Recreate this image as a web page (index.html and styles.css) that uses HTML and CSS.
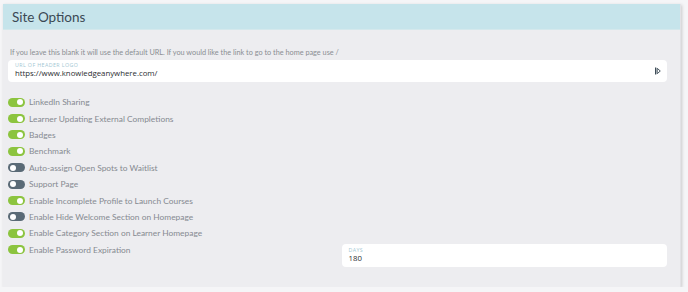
FILE: index.html
```html
<!DOCTYPE html>
<html lang="en">
<head>
    <meta charset="UTF-8">
    <title>Site Options</title>
    <link rel="stylesheet" href="styles.css">
</head>
<body>
    <section class="panel">
        <div class="panel-header">Site Options</div>
        <div class="panel-body">
            <p class="help">If you leave this blank it will use the default URL. If you would like the link to go to the home page use /</p>
            <div class="field">
                <span class="field-label">URL of Header Logo</span>
                <span class="field-value">https://www.knowledgeanywhere.com/</span>
                <svg class="field-icon" width="6" height="8" viewBox="0 0 6 8">
                    <rect x="0" y="0.5" width="1.3" height="7" fill="#3e4d58"/>
                    <path d="M2.2 1.3 L5.3 4 L2.2 6.7 Z" fill="none" stroke="#4a5963" stroke-width="1"/>
                </svg>
            </div>
            <ul class="toggles">
                <li><span class="toggle on"></span>LinkedIn Sharing</li>
                <li><span class="toggle on"></span>Learner Updating External Completions</li>
                <li><span class="toggle on"></span>Badges</li>
                <li><span class="toggle on"></span>Benchmark</li>
                <li><span class="toggle"></span>Auto-assign Open Spots to Waitlist</li>
                <li><span class="toggle"></span>Support Page</li>
                <li><span class="toggle on"></span>Enable Incomplete Profile to Launch Courses</li>
                <li><span class="toggle"></span>Enable Hide Welcome Section on Homepage</li>
                <li><span class="toggle on"></span>Enable Category Section on Learner Homepage</li>
            </ul>
            <div class="last-row">
                <div class="toggle-row"><span class="toggle on"></span>Enable Password Expiration</div>
                <div class="field days">
                    <span class="field-label">Days</span>
                    <span class="field-value">180</span>
                </div>
            </div>
        </div>
    </section>
</body>
</html>
```

FILE: styles.css
```css
:root {
    --green: #8cc43f;
    --slate: #5a6a76;
    --muted: #868a90;
}
html, body {
    margin: 0;
    padding: 0;
    background: #f5f5f7;
    font-family: 'Lato', 'Open Sans', Arial, sans-serif;
}
body {
    padding: 4px 0 0 3px;
}
.panel {
    width: 677px;
    height: 283px;
    background: #ededf0;
    box-shadow: 1px 1px 3px rgba(0, 0, 0, 0.18);
    border-right: 1px solid #e2e2e6;
}
.panel-header {
    height: 26px;
    line-height: 26px;
    padding: 0 9px;
    background: #c6e4eb;
    color: #3b4954;
    font-size: 13.5px;
    border-bottom: 1px solid #d4e8ec;
    box-sizing: border-box;
}
.panel-body {
    padding: 18px 13px 0 5px;
}
.help {
    margin: 0 0 2px 2px;
    font-size: 7.3px;
    line-height: 10px;
    color: #8a8d92;
}
.field {
    position: relative;
    height: 22px;
    background: #fff;
    border-radius: 4px;
    padding: 2px 7px 0;
    box-sizing: border-box;
    display: flex;
    flex-direction: column;
}
.field-label {
    font-family: 'Open Sans', Arial, sans-serif;
    font-size: 5.3px;
    line-height: 6px;
    letter-spacing: 0.4px;
    text-transform: uppercase;
    color: #a3c7d3;
}
.field-value {
    font-family: 'Open Sans', Arial, sans-serif;
    font-size: 7.8px;
    line-height: 11px;
    color: #2a2d31;
}
.field-icon {
    position: absolute;
    right: 6px;
    top: 7px;
}
.toggles {
    list-style: none;
    margin: 12px 0 0;
    padding: 0;
}
.toggles li,
.toggle-row {
    height: 16.4px;
    display: flex;
    align-items: center;
    gap: 4px;
    font-size: 8.4px;
    color: var(--muted);
}
.toggle {
    position: relative;
    width: 17px;
    height: 9px;
    border-radius: 5px;
    background: var(--slate);
    flex: none;
}
.toggle::after {
    content: "";
    position: absolute;
    top: 1.5px;
    left: 2px;
    width: 6px;
    height: 6px;
    border-radius: 50%;
    background: #fff;
}
.toggle.on {
    background: var(--green);
}
.toggle.on::after {
    left: 9px;
}
.last-row {
    display: grid;
    grid-template-columns: 1fr 1fr;
    column-gap: 8px;
}
.days {
    margin-top: 2.5px;
    height: 23px;
    padding-top: 3px;
}
```
